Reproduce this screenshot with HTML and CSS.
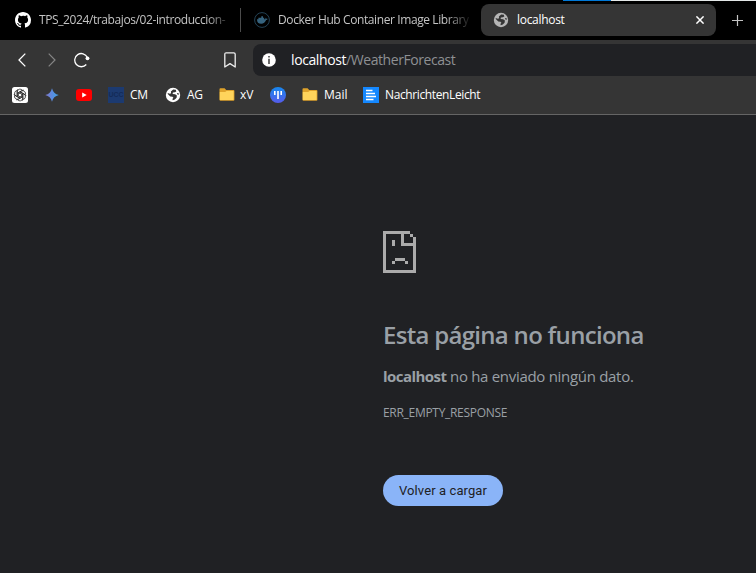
FILE: index.html
```html
<!DOCTYPE html>
<html lang="es">
<head>
<meta charset="utf-8">
<title>localhost</title>
<link rel="stylesheet" href="styles.css">
</head>
<body>
<svg class="defs" width="0" height="0" aria-hidden="true">
  <symbol id="globe" viewBox="0 0 16 16">
    <circle cx="8" cy="8" r="7.200" fill="currentColor"/>
    <path class="land" d="M8.200 2.600l2.600.2.500 1.600-1.500.8-1.900.2-.3 1.500 2.500.4 1.800 1.300-.3 2.200-1.800 1.800-2 .6-.4-1.100 1-1.300-.9-1-2.200-.3L3 7.300l-.4-1.200 2.300.7 1.200-.5-.2-1.800zM12 6l1.700.2.100 1.500-1.400-.3z"/>
  </symbol>
  <symbol id="folder" viewBox="0 0 16 16">
    <path d="M.5 2.200q0-.9.9-.9h4.200l1.600 1.800h7.200q1 0 1 1v8.600q0 1-1 1H1.500q-1 0-1-1z" fill="#dfa32b"/>
    <path d="M.8 5.100h5.300l1.500-1.200h7v8.600q0 .6-.6.6H1.400q-.6 0-.6-.6z" fill="#ffd45b"/>
  </symbol>
</svg>
<header class="tabs">
  <div class="window-edge"><i></i></div>
  <div class="tab tab-github">
    <svg width="16" height="16" viewBox="0 0 16 16"><path fill="#fff" d="M8 0C3.580 0 0 3.580 0 8c0 3.540 2.290 6.530 5.470 7.590.4.070.55-.17.55-.38 0-.19-.01-.82-.01-1.490-2.010.37-2.530-.49-2.690-.94-.09-.23-.48-.94-.82-1.130-.28-.15-.68-.52-.01-.53.63-.01 1.080.58 1.230.82.72 1.210 1.870.87 2.330.66.07-.52.28-.87.51-1.070-1.780-.2-3.640-.89-3.640-3.950 0-.87.31-1.590.82-2.150-.08-.2-.36-1.020.08-2.120 0 0 .67-.21 2.200.82A7.600 7.600 0 0 1 8 3.860c.68 0 1.360.09 2 .27 1.530-1.040 2.200-.82 2.200-.82.44 1.100.16 1.920.08 2.120.51.56.82 1.270.82 2.150 0 3.070-1.870 3.750-3.650 3.950.29.25.54.73.54 1.480 0 1.070-.01 1.930-.01 2.200 0 .21.15.46.55.38A8 8 0 0 0 16 8c0-4.420-3.580-8-8-8"/></svg>
    <span class="title title-github">TPS_2024/trabajos/02-introduccion-</span>
  </div>
  <div class="tab tab-docker">
    <svg width="16" height="16" viewBox="0 0 16 16"><circle cx="8" cy="8" r="7.400" fill="none" stroke="#234255"/><path fill="#36637e" d="M3 7.200h1.400V5.800h2.900V4.300H9v1.500h1.200v1.400h1.200c.2-.6 0-1 .3-1.500.5.3.8.8.8 1.200.5-.1.9 0 1.200.2-.3.7-.9 1-1.600 1-.9 2.400-2.600 3.600-4.900 3.600-2.800 0-4.300-1.400-4.200-4.500z"/></svg>
    <span class="title title-docker">Docker Hub Container Image Library</span>
  </div>
  <div class="tab tab-active">
    <svg class="globe-gray" width="16" height="16"><use href="#globe"/></svg>
    <span class="title title-local">localhost</span>
    <svg class="close" width="8" height="8" viewBox="0 0 8 8"><path d="M.4.4l7.200 7.200M7.600.4L.4 7.600" stroke="#fff" stroke-width="1.500"/></svg>
  </div>
  <svg class="new-tab" width="11" height="11" viewBox="0 0 11 11"><path d="M5.500 0v11M0 5.500h11" stroke="#c4c4c4" stroke-width="1.200"/></svg>
</header>
<nav class="toolbar">
  <svg class="back" width="8" height="14" viewBox="0 0 8 14"><path d="M7.300.6L1 7l6.300 6.400" fill="none" stroke="#fff" stroke-width="1.300"/></svg>
  <svg class="forward" width="8" height="14" viewBox="0 0 8 14"><path d="M.7.6L7 7 .7 13.400" fill="none" stroke="#858585" stroke-width="1.200"/></svg>
  <svg class="reload" width="16" height="16" viewBox="0 0 16 16"><path d="M12.300 12.500A6.600 6.600 0 1 1 13.300 5.300" fill="none" stroke="#fff" stroke-width="1.300"/><circle cx="13.500" cy="6.300" r="1.900" fill="#fff"/></svg>
  <svg class="bookmark" width="12" height="16" viewBox="0 0 12 16"><path d="M.8 15V2.200Q.8.800 2.200.8h7.600q1.400 0 1.400 1.400V15L6 11.600z" fill="none" stroke="#eee" stroke-width="1.300" stroke-linejoin="round"/></svg>
  <div class="address">
    <svg width="14" height="14" viewBox="0 0 14 14"><circle cx="7" cy="7" r="6.800" fill="#fff"/><path d="M6.200 3h1.600v1.500H6.200zM6.200 5.800h1.600V11H6.200z" fill="#444"/></svg>
    <span class="host">localhost</span><span class="path">/WeatherForecast</span>
  </div>
</nav>
<nav class="bookmarks">
  <svg class="b-ai" width="16" height="16" viewBox="0 0 16 16"><rect width="16" height="16" rx="2.500" fill="#fff"/><g fill="none" stroke="#222" stroke-width=".75"><path id="knot" d="M5.200 9.600V4.900a2.900 2.900 0 0 1 5.300-1.500M6.300 9V5.700l3.800-2.200a2.800 2.800 0 0 1 1.700-.3"/><use href="#knot" transform="rotate(60 8 8)"/><use href="#knot" transform="rotate(120 8 8)"/><use href="#knot" transform="rotate(180 8 8)"/><use href="#knot" transform="rotate(240 8 8)"/><use href="#knot" transform="rotate(300 8 8)"/></g></svg>
  <svg class="b-spark" width="14" height="14" viewBox="0 0 14 14"><defs><linearGradient id="sg"><stop offset="0" stop-color="#8577c8"/><stop offset=".5" stop-color="#5a8be0"/><stop offset="1" stop-color="#3fa4e4"/></linearGradient></defs><path d="M7 .2Q8.300 5.700 13.800 7 8.300 8.300 7 13.800 5.700 8.300.2 7 5.700 5.700 7 .2z" fill="url(#sg)"/></svg>
  <svg class="b-video" width="16" height="12" viewBox="0 0 16 12"><rect width="16" height="12" rx="3" fill="#f00"/><path d="M6.200 3.400v5.200L10.700 6z" fill="#fff"/></svg>
  <span class="ucc">UCC</span>
  <span class="label cm">CM</span>
  <svg class="b-globe" width="16" height="16"><use href="#globe"/></svg>
  <span class="label ag">AG</span>
  <svg class="b-xv" width="16" height="16"><use href="#folder"/></svg>
  <span class="label xv">xV</span>
  <svg class="b-t" width="16" height="16" viewBox="0 0 16 16"><defs><linearGradient id="tg" x1="0" x2="0" y1="0" y2="1"><stop stop-color="#1688ee"/><stop offset="1" stop-color="#565bea"/></linearGradient></defs><circle cx="8" cy="8" r="8" fill="url(#tg)"/><path d="M4 4h1.600v4H4zM7.200 4h1.600v8H7.200zM10.400 4H12v4h-1.600z" fill="#fff"/></svg>
  <svg class="b-mail" width="16" height="16"><use href="#folder"/></svg>
  <span class="label mail">Mail</span>
  <svg class="b-news" width="16" height="16" viewBox="0 0 16 16"><path fill="#1488ff" d="M0 0h16v16H0z"/><path d="M3 3.500h6.500M3 6.500h9M3 9.500h10M3 12.500h7.500" stroke="#fff" stroke-width="1.400"/></svg>
  <span class="label news">NachrichtenLeicht</span>
</nav>
<main>
  <svg class="sad" width="33" height="42" viewBox="0 0 33 42" shape-rendering="crispEdges"><path fill="#ababab" d="M0 0h27v3h3v3h3v36H0zM3 3v36h27V15H18V3zM21 3v9h9V6h-3V3zM9 9h3v6H9zM12 27h10v3H12zM9 30h3v3H9zM22 30h3v3h-3z" fill-rule="evenodd"/></svg>
  <h1>Esta página no funciona</h1>
  <p class="message"><strong>localhost</strong><span> no ha enviado ningún dato.</span></p>
  <p class="code">ERR_EMPTY_RESPONSE</p>
  <button>Volver a cargar</button>
</main>
</body>
</html>
```
FILE: styles.css
```css
* { box-sizing: border-box; }
html, body { height: 100%; }
body {
  margin: 0;
  overflow: hidden;
  display: flex;
  flex-direction: column;
  background: #202124;
  font-family: "Open Sans", "Noto Sans", sans-serif;
}
svg { display: block; flex: none; }
.defs { position: absolute; }
.tabs {
  position: relative;
  display: flex;
  align-items: center;
  flex: none;
  height: 40px;
  background: #000;
}
.window-edge {
  position: absolute;
  top: 0;
  left: 563px;
  right: 0;
  height: 1px;
  background: #e4e8e8;
}
.window-edge i { display: block; width: 48px; height: 1px; background: #0078d7; }
.tab { display: flex; align-items: center; height: 32px; font-size: 12px; white-space: nowrap; }
.tab-github { width: 241px; height: 24px; padding-left: 15px; gap: 8px; border-right: 1px solid #4c4c4c; }
.tab-docker { width: 240px; padding-left: 13px; gap: 8px; }
.tab-active { width: 235px; padding: 0 12px; gap: 8px; border-radius: 8px; background: #353535; }
.title { line-height: 18px; color: #c4c4c4; overflow: hidden; }
.title-github, .title-docker {
  width: 192px;
  mask-image: linear-gradient(to right, #000 168px, transparent 194px);
}
.title-github { letter-spacing: -0.4px; }
.title-docker { letter-spacing: -0.4px; }
.title-local { color: #fff; letter-spacing: -0.3px; }
.globe-gray { color: #b5b5b5; }
.land { fill: #353535; }
.close { margin-left: auto; }
.new-tab { margin-left: 16px; }
.toolbar { display: flex; align-items: center; flex: none; height: 40px; padding-left: 18px; background: #353535; }
.forward { margin-left: 22px; }
.reload { margin-left: 18px; }
.bookmark { margin-left: 134px; }
.address {
  display: flex;
  align-items: center;
  flex: 1;
  height: 32px;
  margin-left: 17px;
  padding-left: 9px;
  border-radius: 8px 0 0 8px;
  background: #202124;
  font-size: 14px;
  line-height: 20px;
}
.host { margin-left: 15px; color: #fff; letter-spacing: -0.4px; }
.path { color: #8e9093; letter-spacing: -0.43px; }
.bookmarks {
  display: flex;
  align-items: center;
  flex: none;
  height: 35px;
  padding: 0 0 5px 12px;
  border-bottom: 1px solid #656565;
  background: #353535;
}
.label { color: #fff; font-size: 12px; line-height: 18px; white-space: nowrap; }
.b-spark { margin-left: 17px; }
.b-video { margin-left: 17px; }
.ucc {
  width: 16px;
  height: 16px;
  margin-left: 16px;
  background: #1c3a70;
  color: #142b57;
  font: bold 7px/16px "Liberation Sans", sans-serif;
  text-align: center;
}
.cm { width: 20px; margin-left: 6px; letter-spacing: -0.3px; }
.b-globe { margin-left: 15px; color: #fff; }
.ag { width: 18px; margin-left: 6px; letter-spacing: -0.3px; }
.b-xv { margin-left: 14px; }
.xv { width: 15px; margin-left: 5px; }
.b-t { margin-left: 15px; }
.b-mail { margin-left: 16px; }
.mail { width: 24px; margin-left: 6px; }
.b-news { margin-left: 15px; }
.news { margin-left: 6px; letter-spacing: -0.38px; }
main { padding: 116px 0 0 383px; color: #9aa0a6; white-space: nowrap; }
h1 { margin: 45px 0 0; font-size: 24px; line-height: 34px; font-weight: 600; letter-spacing: -0.7px; }
.message { margin: 14px 0 0; font-size: 15px; line-height: 20px; letter-spacing: -0.3px; }
.message strong { font-weight: 700; letter-spacing: -0.55px; }
.code { margin: 18px 0 0; font-size: 12px; line-height: 18px; letter-spacing: -0.3px; }
button {
  display: block;
  width: 120px;
  height: 31px;
  margin: 53px 0 0;
  padding: 0;
  border: 0;
  border-radius: 16px;
  background: #8ab4f8;
  color: #202124;
  font: 13px/31px Roboto, sans-serif;
  letter-spacing: 0.1px;
}
```
